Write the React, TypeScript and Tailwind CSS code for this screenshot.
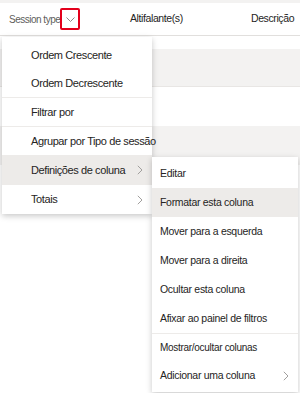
import { type ReactNode } from "react";

const Chevron = () => (
	<svg width="6" height="10" viewBox="0 0 6 10" className="shrink-0">
		<path d="M0.8 0.8 L5 5 L0.8 9.2" fill="none" stroke="#a19f9d" strokeWidth="1" />
	</svg>
);

const MenuItem = ({
	children,
	active,
	sub,
	h = "h-[28px]",
	pl = "pl-[29px]",
}: {
	children: ReactNode;
	active?: boolean;
	sub?: boolean;
	h?: string;
	pl?: string;
}) => (
	<div
		className={`flex items-center justify-between pr-[9px] whitespace-nowrap ${h} ${pl} ${
			active ? "bg-[#edebe9]" : ""
		}`}
	>
		<span>{children}</span>
		{sub && <Chevron />}
	</div>
);

const Divider = () => <div className="h-px bg-[#edebe9]" />;

const Header = () => (
	<div className="flex items-center h-[33px] border-b border-[#e1dfdd] text-[10.5px] tracking-[-0.4px]">
		<div className="flex items-center w-[130px] pl-[9px]">
			<span className="text-[#605e5c] text-[10px] tracking-[-0.5px]">Session type</span>
			<span className="flex items-center justify-center w-[20px] h-[22px] border-2 border-[#e3001b] rounded-[2px]">
				<svg width="9" height="5" viewBox="0 0 9 5">
					<path d="M0.5 0.5 L4.5 4.5 L8.5 0.5" fill="none" stroke="#8a8886" strokeWidth="1" />
				</svg>
			</span>
		</div>
		<div className="w-[121px] text-[#252423]">Altifalante(s)</div>
		<div className="flex-1 text-[#252423] whitespace-nowrap">Descrição</div>
	</div>
);

const Rows = () => (
	<div className="flex flex-col">
		<div className="h-[13px]" />
		<div className="h-[38px] bg-[#f3f2f1] border-b border-[#e8e6e4]" />
		<div className="h-[39px]" />
		<div className="h-[39px] bg-[#f3f2f1]" />
	</div>
);

const MainMenu = () => (
	<div className="absolute left-[2px] top-[37px] w-[150px] bg-white pt-[4px] shadow-[0_2px_6px_rgba(0,0,0,0.22)] text-[11px] tracking-[-0.4px] text-[#252423]">
		<MenuItem>Ordem Crescente</MenuItem>
		<MenuItem>Ordem Decrescente</MenuItem>
		<Divider />
		<MenuItem>Filtrar por</MenuItem>
		<Divider />
		<MenuItem>Agrupar por Tipo de sessão</MenuItem>
		<MenuItem active sub h="h-[30px]">
			Definições de coluna
		</MenuItem>
		<MenuItem sub h="h-[29px]">
			Totais
		</MenuItem>
	</div>
);

const SubMenu = () => (
	<div className="absolute left-[152px] top-[157px] w-[146px] bg-white pt-[2px] pb-[2px] shadow-[0_2px_6px_rgba(0,0,0,0.22)] text-[10.5px] tracking-[-0.3px] text-[#252423]">
		<MenuItem h="h-[29px]" pl="pl-[8px]">Editar</MenuItem>
		<MenuItem active h="h-[29px]" pl="pl-[8px]">Formatar esta coluna</MenuItem>
		<MenuItem h="h-[29px]" pl="pl-[8px]">Mover para a esquerda</MenuItem>
		<MenuItem h="h-[29px]" pl="pl-[8px]">Mover para a direita</MenuItem>
		<MenuItem h="h-[29px]" pl="pl-[8px]">Ocultar esta coluna</MenuItem>
		<MenuItem h="h-[29px]" pl="pl-[8px]">Afixar ao painel de filtros</MenuItem>
		<Divider />
		<MenuItem pl="pl-[8px]">
			<span className="text-[10px]">Mostrar/ocultar colunas</span>
		</MenuItem>
		<MenuItem sub pl="pl-[8px]">
			Adicionar uma coluna
		</MenuItem>
	</div>
);

export default function App() {
	return (
		<div className="relative w-[300px] h-[393px] overflow-hidden bg-white font-['Liberation_Sans',Arial,sans-serif]">
			<div className="h-[3px] bg-[#f3f2f1]" />
			<Header />
			<Rows />
			<MainMenu />
			<SubMenu />
		</div>
	);
}
